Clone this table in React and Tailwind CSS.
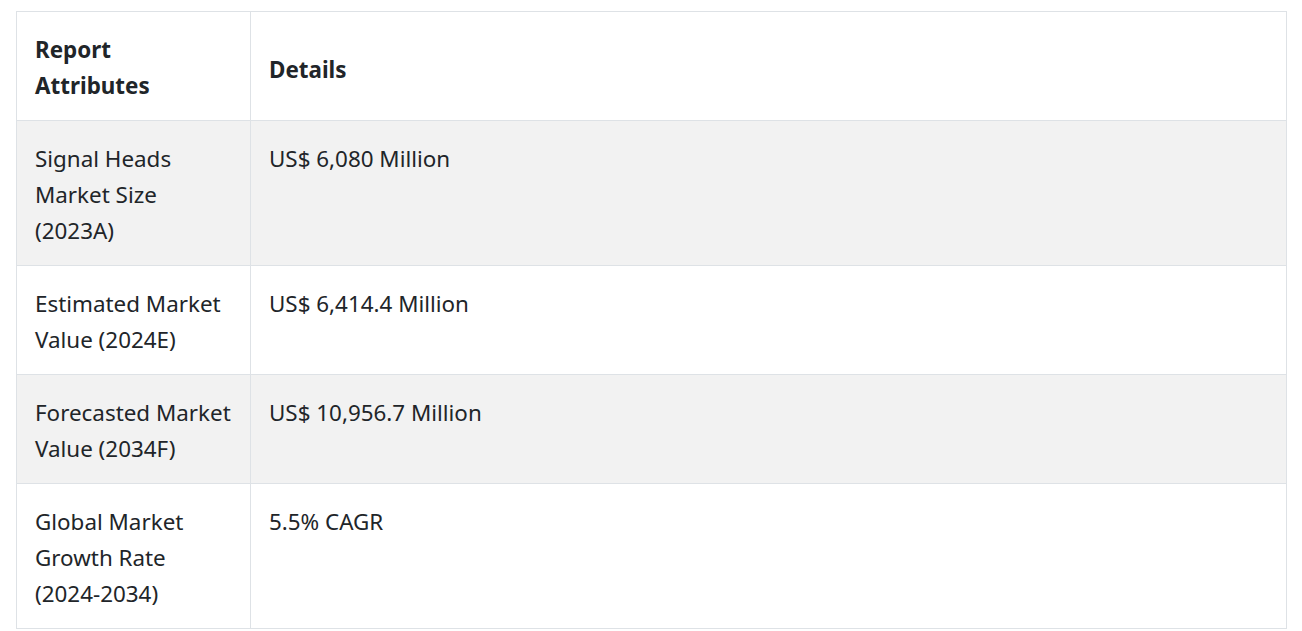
export default function App() {
  const rows = [
    [["Signal Heads", "Market Size", "(2023A)"], "US$ 6,080 Million"],
    [["Estimated Market", "Value (2024E)"], "US$ 6,414.4 Million"],
    [["Forecasted Market", "Value (2034F)"], "US$ 10,956.7 Million"],
    [["Global Market", "Growth Rate", "(2024-2034)"], "5.5% CAGR"],
  ];
  const lines = (arr) => arr.map((t, j) => <span key={j} className="block whitespace-nowrap">{t}</span>);
  return (
    <div className="bg-white w-[1302px] h-[631px] overflow-hidden pt-[11px] pl-[16px]" style={{ fontFamily: '"Noto Sans", "Open Sans", sans-serif' }}>
      <table className="w-[1271px] border-collapse text-[22.4px] leading-[36px] text-[#212529] table-fixed">
        <colgroup>
          <col className="w-[234px]" />
          <col />
        </colgroup>
        <thead>
          <tr className="bg-white">
            <th className="border border-[#dee2e6] px-[18px] pt-[20px] pb-[16px] text-left align-middle font-bold">{lines(["Report", "Attributes"])}</th>
            <th className="border border-[#dee2e6] px-[18px] pt-[22px] pb-[14px] text-left align-middle font-bold">Details</th>
          </tr>
        </thead>
        <tbody>
          {rows.map((r, i) => (
            <tr key={i} className={i % 2 === 0 ? "bg-[#f2f2f2]" : "bg-white"}>
              <td className="border border-[#dee2e6] px-[18px] pt-[20px] pb-[16px] align-top">{lines(r[0])}</td>
              <td className="border border-[#dee2e6] px-[18px] pt-[20px] pb-[16px] align-top">{r[1]}</td>
            </tr>
          ))}
        </tbody>
      </table>
    </div>
  );
}
